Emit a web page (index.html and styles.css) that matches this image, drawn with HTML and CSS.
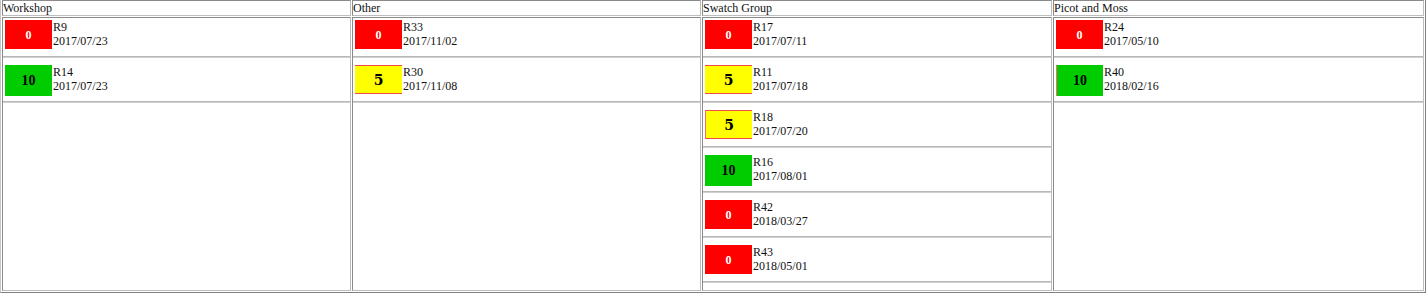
FILE: index.html
```html
<!DOCTYPE html>
<html>
<head>
<meta charset="utf-8">
<title>Board</title>
<link rel="stylesheet" href="styles.css">
</head>
<body>
<div class="board">
  <div class="head">Workshop</div>
  <div class="head">Other</div>
  <div class="head">Swatch Group</div>
  <div class="head">Picot and Moss</div>

  <div class="col">
    <div class="card"><div class="score score--red">0</div><div class="info"><div>R9</div><div>2017/07/23</div></div></div>
    <hr class="sep">
    <div class="card"><div class="score score--green">10</div><div class="info"><div>R14</div><div>2017/07/23</div></div></div>
    <hr class="sep">
  </div>

  <div class="col">
    <div class="card"><div class="score score--red">0</div><div class="info"><div>R33</div><div>2017/11/02</div></div></div>
    <hr class="sep">
    <div class="card"><div class="score score--yellow">5</div><div class="info"><div>R30</div><div>2017/11/08</div></div></div>
    <hr class="sep">
  </div>

  <div class="col">
    <div class="card"><div class="score score--red">0</div><div class="info"><div>R17</div><div>2017/07/11</div></div></div>
    <hr class="sep">
    <div class="card"><div class="score score--yellow">5</div><div class="info"><div>R11</div><div>2017/07/18</div></div></div>
    <hr class="sep">
    <div class="card"><div class="score score--yellow score--edge">5</div><div class="info"><div>R18</div><div>2017/07/20</div></div></div>
    <hr class="sep">
    <div class="card"><div class="score score--green">10</div><div class="info"><div>R16</div><div>2017/08/01</div></div></div>
    <hr class="sep">
    <div class="card"><div class="score score--red">0</div><div class="info"><div>R42</div><div>2018/03/27</div></div></div>
    <hr class="sep">
    <div class="card"><div class="score score--red">0</div><div class="info"><div>R43</div><div>2018/05/01</div></div></div>
    <hr class="sep">
  </div>

  <div class="col">
    <div class="card"><div class="score score--red">0</div><div class="info"><div>R24</div><div>2017/05/10</div></div></div>
    <hr class="sep">
    <div class="card"><div class="score score--green score--edge">10</div><div class="info"><div>R40</div><div>2018/02/16</div></div></div>
    <hr class="sep">
  </div>
</div>
</body>
</html>
```

FILE: styles.css
```css
html, body {
  margin: 0;
  padding: 0;
  background: #ffffff;
}

body {
  font-family: "Liberation Serif", "Times New Roman", serif;
  font-size: 12px;
  color: #111111;
}

.board {
  box-sizing: border-box;
  width: 1426px;
  height: 293px;
  display: grid;
  grid-template-columns: 349px 349px 350px 1fr;
  grid-template-rows: auto 1fr;
  gap: 1px;
  padding: 0 1px 1px 1px;
  border-style: solid;
  border-width: 0 1px 1px 1px;
  border-color: #c8c8c8 #808080 #808080 #c8c8c8;
}

.head,
.col {
  border: 1px solid;
  border-color: #8a8a8a #bdbdbd #bdbdbd #8a8a8a;
}

.head {
  padding: 0;
  line-height: 14px;
  white-space: nowrap;
}

.col {
  padding: 2px 0 0 0;
  min-width: 0;
}

.card {
  display: flex;
  align-items: flex-start;
  gap: 1px;
  height: 29px;
  padding-left: 2px;
}

.score {
  box-sizing: border-box;
  flex: none;
  width: 47px;
  height: 29px;
  display: flex;
  align-items: center;
  justify-content: center;
  font-family: "Liberation Serif", "Times New Roman", serif;
  font-weight: bold;
  line-height: 1;
}

.score--red {
  background: #ff0000;
  color: #ffffff;
  font-size: 12px;
}

.score--yellow {
  background: #ffff00;
  color: #000000;
  font-family: "DejaVu Serif", serif;
  font-size: 14px;
  border-top: 1px solid #f04a4a;
  border-bottom: 1px solid #f04a4a;
}

.score--green {
  background: #00cc00;
  color: #000000;
  font-size: 14px;
  height: 31px;
}

.score--edge {
  border-left: 1px solid #f07070;
}

.info {
  line-height: 14px;
  white-space: nowrap;
}

.sep {
  height: 0;
  margin: 7px 0;
  border: 0;
  border-top: 1px solid #b8b8b8;
  border-bottom: 1px solid #d0d0d0;
}
```
